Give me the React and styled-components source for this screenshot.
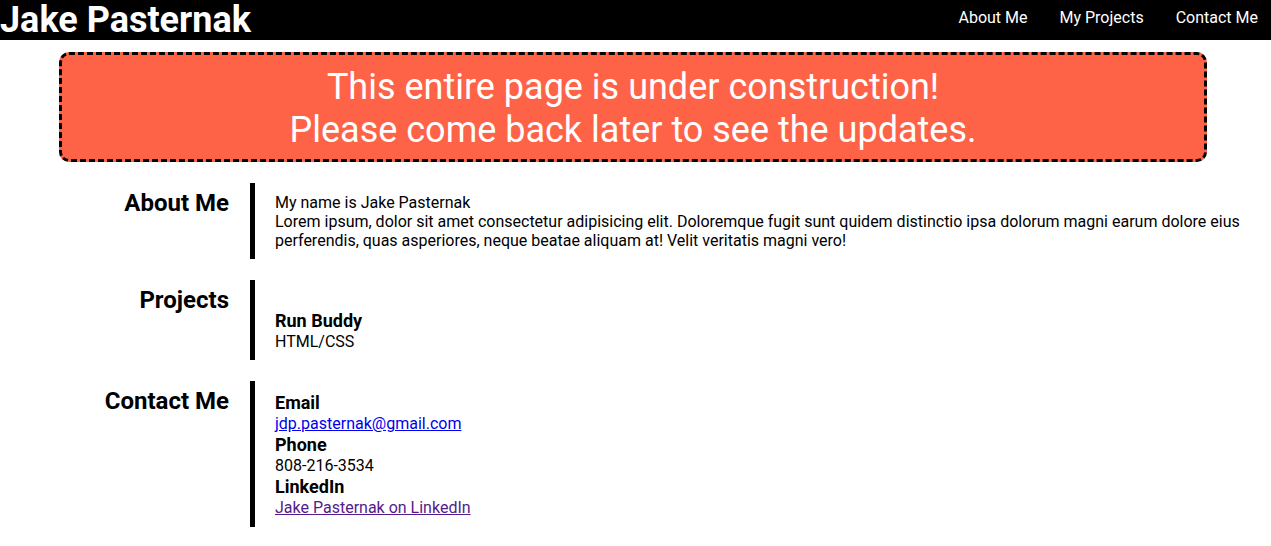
import React from "react";
import styled, { createGlobalStyle } from "styled-components";

const GlobalStyle = createGlobalStyle`
  body {
    margin: 0;
    font-family: Roboto, "Liberation Sans", sans-serif;
    color: #000;
    background: #fff;
  }
`;

export default function App() {
  return (
    <>
      <GlobalStyle />
      <Header>
        <Title>Jake Pasternak</Title>
        <Nav>
          <NavLink href="#about">About Me</NavLink>
          <NavLink href="#projects">My Projects</NavLink>
          <NavLink href="#contact">Contact Me</NavLink>
        </Nav>
      </Header>

      <Banner>
        This entire page is under construction!
        <br />
        Please come back later to see the updates.
      </Banner>

      <Section id="about">
        <SectionTitle>About Me</SectionTitle>
        <SectionBody>
          <Paragraph>My name is Jake Pasternak</Paragraph>
          <Paragraph>
            Lorem ipsum, dolor sit amet consectetur adipisicing elit. Doloremque fugit sunt quidem
            distinctio ipsa dolorum magni earum dolore eius perferendis, quas asperiores, neque
            beatae aliquam at! Velit veritatis magni vero!
          </Paragraph>
        </SectionBody>
      </Section>

      <Section id="projects">
        <SectionTitle>Projects</SectionTitle>
        <SectionBody>
          <Project>
            <Label>Run Buddy</Label>
            <Text>HTML/CSS</Text>
          </Project>
        </SectionBody>
      </Section>

      <Section id="contact">
        <SectionTitle>Contact Me</SectionTitle>
        <SectionBody $top={10} $bottom={10}>
          <Label>Email</Label>
          <Link href="#email">jdp.pasternak@gmail.com</Link>
          <Label>Phone</Label>
          <Text>808-216-3534</Text>
          <Label>LinkedIn</Label>
          <Link href="#linkedin" $visited>Jake Pasternak on LinkedIn</Link>
        </SectionBody>
      </Section>
    </>
  );
}

const Header = styled.header`
  display: flex;
  justify-content: space-between;
  align-items: center;
  height: 40px;
  background-color: #000;
  color: #fff;
`;

const Title = styled.h1`
  margin: 0;
  font-size: 36px;
  font-weight: 700;
  line-height: 40px;
`;

const Nav = styled.nav`
  display: flex;
  gap: 32px;
  padding-right: 13px;
  padding-bottom: 5px;
`;

const NavLink = styled.a`
  color: #fff;
  text-decoration: none;
  font-size: 16px;
`;

const Banner = styled.div`
  margin: 12px 64px 21px 59px;
  padding: 11px 10px 7px;
  border: 3px dashed #000;
  border-radius: 10px;
  background-color: tomato;
  color: #fff;
  font-size: 36px;
  line-height: 43px;
  text-align: center;
`;

const Section = styled.section`
  display: grid;
  grid-template-columns: 229px 1fr;
  column-gap: 21px;
  margin-bottom: 21px;
  padding-right: 20px;
`;

const SectionTitle = styled.h2`
  margin: 0;
  padding-top: 6px;
  font-size: 24px;
  line-height: 28px;
  font-weight: 700;
  text-align: right;
`;

const SectionBody = styled.div`
  border-left: 5px solid #000;
  padding: ${(p) => p.$top ?? 11}px 0 ${(p) => p.$bottom ?? 9}px 20px;
`;

const Paragraph = styled.div`
  font-size: 16px;
  line-height: 18.75px;
`;

const Text = styled.div`
  font-size: 16px;
  line-height: 18px;
`;

const Label = styled.div`
  font-size: 18px;
  line-height: 24px;
  font-weight: 700;
`;

const Project = styled.div`
  margin-top: 18px;
`;

const Link = styled.a`
  display: block;
  width: fit-content;
  font-size: 16px;
  line-height: 18px;
  color: ${(p) => (p.$visited ? "#551a8b" : "#0000ee")};
  text-decoration: underline;
`;
